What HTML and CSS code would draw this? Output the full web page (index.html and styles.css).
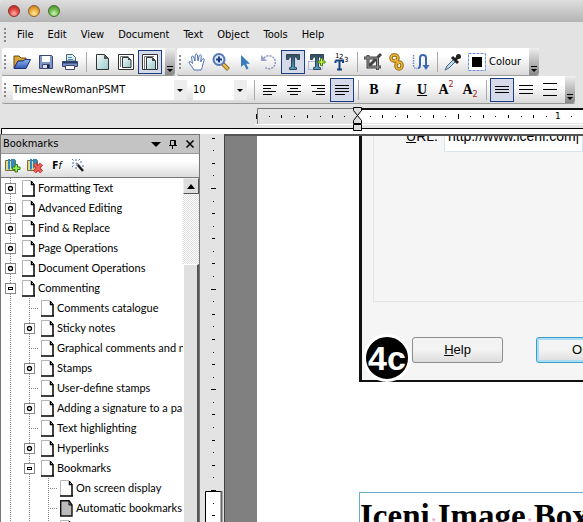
FILE: index.html
```html
<!DOCTYPE html>
<html lang="en">
<head>
<meta charset="utf-8">
<title>PDF Editor</title>
<link rel="stylesheet" href="styles.css">
</head>
<body>
<svg class="defs" aria-hidden="true">
  <defs>
    <linearGradient id="pageFill" x1="0" y1="0" x2="1" y2="1"><stop offset="0" stop-color="#f4fbfa"/><stop offset="1" stop-color="#98c9cb"/></linearGradient>
    <linearGradient id="tFill" x1="0" y1="0" x2="0" y2="1"><stop offset="0" stop-color="#34495c"/><stop offset="1" stop-color="#4aa3cf"/></linearGradient>
    <linearGradient id="blue" x1="0" y1="0" x2="0" y2="1"><stop offset="0" stop-color="#8fb4ee"/><stop offset="1" stop-color="#3158b8"/></linearGradient>
    <symbol id="sheet" viewBox="0 0 13 17"><path d="M1 16V1h8l3 4v11z" fill="#fff"/><path d="M.5 16V.5H9" fill="none" stroke="#b4b4b4"/><path d="M9.500 1v3.500H12M12 4v12M0 16h13" fill="none" stroke="#000" stroke-width="1.500"/><path d="M9 1l3 3" stroke="#000"/></symbol>
    <symbol id="plus" viewBox="0 0 11 11"><rect x=".5" y=".5" width="10" height="10" fill="#fff" stroke="#888"/><circle cx="5.500" cy="5.500" r="2" fill="#fff" stroke="#000" stroke-width="1.300"/></symbol>
    <symbol id="minus" viewBox="0 0 11 11"><rect x=".5" y=".5" width="10" height="10" fill="#fff" stroke="#888"/><rect x="3.500" y="4.500" width="4" height="2" fill="#fff" stroke="#000"/></symbol>
  </defs>
</svg>

<header class="titlebar"><span class="light red"></span><span class="light amber"></span><span class="light green"></span></header>

<nav class="menubar">
  <span class="grip"></span>
  <a href="#">File</a><a href="#">Edit</a><a href="#">View</a><a href="#">Document</a><a href="#">Text</a><a href="#">Object</a><a href="#">Tools</a><a href="#">Help</a>
</nav>

<div class="toolrow">
  <div class="toolbar">
    <span class="grip"></span>
    <button class="tool" aria-label="Open"><svg width="20" height="20" viewBox="0 0 20 20"><path d="M2 16V4h5l2 2h5v3H6z" fill="#d9a53a" stroke="#6b4a10"/><path d="M2 16.500L6 9h5l2-1.500h5.500L14 16.500z" fill="url(#blue)" stroke="#17307a"/></svg></button>
    <button class="tool" aria-label="Save"><svg width="20" height="20" viewBox="0 0 20 20"><path d="M3.500 3.500h12l1 1v12h-13z" fill="#7f96c8" stroke="#3a4677"/><path d="M6 4h8v6H6z" fill="#fff"/><path d="M6.500 12.500h7v4h-7z" fill="#dfe3ee" stroke="#3a4677"/><path d="M11 13h2v3h-2z" fill="#223"/></svg></button>
    <button class="tool" aria-label="Print"><svg width="20" height="20" viewBox="0 0 20 20"><path d="M6.500 9V2.500h6l3 3V9z" fill="#d5f0f5" stroke="#466"/><path d="M8 5.500h4M8 7.500h5" stroke="#58a"/><path d="M2.500 9.500h15v5h-15z" fill="#7591c6" stroke="#35446f"/><path d="M3 10h14v1.500H3z" fill="#2b3c6e"/><path d="M5.500 13.500h9v4h-9z" fill="#fff" stroke="#446"/></svg></button>
    <span class="sep"></span>
    <button class="tool" aria-label="Single page"><svg width="20" height="20" viewBox="0 0 20 20"><path d="M4.500 2.500h8l4 4v11h-12z" fill="url(#pageFill)" stroke="#333"/><path d="M12 2.500v4.500h4.500z" fill="#555"/></svg></button>
    <button class="tool" aria-label="Page with border"><svg width="20" height="20" viewBox="0 0 20 20"><path d="M2.500 2.500h15v15h-15z" fill="#fff" stroke="#333"/><path d="M6.500 5.500h6l2.500 2.500v7.500H6.500z" fill="url(#pageFill)" stroke="#333"/><path d="M4.500 15V4.500h8" fill="none" stroke="#777"/><path d="M12 5.500V8h3z" fill="#444"/></svg></button>
    <button class="tool on" aria-label="Page with margins"><svg width="20" height="20" viewBox="0 0 20 20"><path d="M2.500 2.500h15v15h-15z" fill="#fff" stroke="#333"/><path d="M6.500 17.500v-12h6l3 3v9z" fill="url(#pageFill)" stroke="#333"/><path d="M4.500 17V4.500H14" fill="none" stroke="#777"/><path d="M12 5.500v3.500h3.500z" fill="#444"/></svg></button>
    <button class="more" aria-label="More page tools"><svg width="8" height="8" viewBox="0 0 8 8"><path d="M1 1.500h6" stroke="#000" stroke-width="1"/><path d="M1 4h6L4 7z"/></svg></button>
  </div>
  <div class="toolbar">
    <span class="grip"></span>
    <button class="tool" aria-label="Hand"><svg width="20" height="20" viewBox="0 0 20 20"><path d="M7 18C5 14 2 12 2 10c1-1 2 0 3.500 1.500L4.500 5c.5-1.500 2-1 2.200 0L8 9 8.200 3c.3-1.300 2-1.300 2.200 0l.6 6 1.300-5.500c.6-1.200 2-.8 2 .4L13.700 10l1.800-3c1-1 2 0 1.700 1l-1.500 5c-.2 2-.8 3.500-1.700 5z" fill="#fff" stroke="#4e72b4"/></svg></button>
    <button class="tool" aria-label="Zoom"><svg width="20" height="20" viewBox="0 0 20 20"><path d="M12 12l5.500 5.500" stroke="#8a6a20" stroke-width="4"/><path d="M12 12l5 5" stroke="#f3c44c" stroke-width="2"/><circle cx="8" cy="7.500" r="5.500" fill="#dce9fb" stroke="#5577b5" stroke-width="2"/><path d="M5 7.500h6M8 4.500v6" stroke="#1d3d85" stroke-width="2"/></svg></button>
    <button class="tool" aria-label="Select"><svg width="20" height="20" viewBox="0 0 20 20"><path d="M6 3v12l3-2.500 2.500 5 2-1-2.300-4.700H15z" fill="#397ebc"/></svg></button>
    <button class="tool" aria-label="Rotate"><svg width="20" height="20" viewBox="0 0 20 20"><path d="M5 6a6.500 6.500 0 1 1 1 9.500" fill="none" stroke="#8e97c6" stroke-width="1.500" stroke-dasharray="2 1"/><path d="M2 3v6h6z" fill="#9aa1c9"/></svg></button>
    <button class="tool on" aria-label="Edit text"><svg width="20" height="20" viewBox="0 0 20 20"><path d="M3.500 2.500h13v5h-2L13.500 5h-2v10l2 .7v1.800h-7v-1.800l2-.7V5h-2l-1 2.500h-2z" fill="url(#tFill)" stroke="#345"/></svg></button>
    <button class="tool" aria-label="Add text"><svg width="20" height="20" viewBox="0 0 20 20"><path d="M1.500 9.500v8h13M1.500 9.500h14v8" fill="none" stroke="#7389d5" stroke-dasharray="1 1"/><path d="M3.500 2.500h13v5h-2L13.500 5h-2v10l2 .7v1.800h-7v-1.800l2-.7V5h-2l-1 2.500h-2z" fill="url(#tFill)" stroke="#345"/><path d="M13.500 6.500h2v2.500h2.500v2h-2.500v2.500h-2v-2.500H11v-2h2.500z" fill="#cdf53c" stroke="#47801a"/></svg></button>
    <button class="tool" aria-label="Number text"><svg width="22" height="22" viewBox="0 0 22 22"><text x="5" y="7" class="ico-num">1</text><text x="9" y="8" class="ico-num">2</text><text x="14" y="11" class="ico-num">3</text><path d="M5.500 9.500h7.500V12M5.500 12V9.500M9.500 10v8M7 18.500h5" fill="none" stroke="#16407f" stroke-width="2"/></svg></button>
    <span class="sep"></span>
    <button class="tool" aria-label="Crop"><svg width="20" height="20" viewBox="0 0 20 20"><path d="M1 6h13.500v12M5 3v12h13M6 14L18 2" fill="none" stroke="#444" stroke-width="3"/><path d="M1.500 6h13v11.500M5 3.500V15h12.500" fill="none" stroke="#999"/></svg></button>
    <button class="tool" aria-label="Link"><svg width="20" height="20" viewBox="0 0 20 20"><g fill="none" stroke="#94670c" stroke-width="3.500"><rect x="4" y="3" width="7" height="6" rx="3"/><rect x="9" y="10" width="6" height="7" rx="3"/><path d="M8 7l4 5"/></g><g fill="none" stroke="#e8b73c" stroke-width="1.500"><rect x="4" y="3" width="7" height="6" rx="3"/><rect x="9" y="10" width="6" height="7" rx="3"/><path d="M8 7l4 5"/></g></svg></button>
    <button class="tool" aria-label="Reading order"><svg width="20" height="20" viewBox="0 0 20 20"><path d="M2.500 3v10q0 3.500 4 3.500" fill="none" stroke="#6e87c8" stroke-width="1.500" stroke-dasharray="1.500 1"/><path d="M7 16q2 0 2-3V6q0-3 3-3t3 3v8" fill="none" stroke="#3c66b4" stroke-width="2"/><path d="M11.500 13h7L15 18z" fill="#3c66b4"/></svg></button>
    <span class="sep"></span>
    <button class="tool" aria-label="Eyedropper"><svg width="20" height="20" viewBox="0 0 20 20"><path d="M2 18l2-4 7-7 2 2-7 7z" fill="#b7def8" stroke="#4a6277"/><path d="M9 5l6 6M12 8l4-4" stroke="#222" stroke-width="3"/><circle cx="15.500" cy="4.500" r="2.500" fill="#222"/></svg></button>
    <button class="colour"><svg width="18" height="18" viewBox="0 0 18 18"><path d="M.5.500h17v17H.5z" fill="#fff" stroke="#6d8de0" stroke-dasharray="3 1"/><path d="M4 4h10v10H4z"/></svg>Colour</button>
    <button class="more" aria-label="More edit tools"><svg width="8" height="8" viewBox="0 0 8 8"><path d="M1 1.500h6" stroke="#000"/><path d="M1 4h6L4 7z"/></svg></button>
  </div>
</div>

<div class="toolrow">
  <div class="toolbar format">
    <span class="grip"></span>
    <span class="combo font"><select aria-label="Font"><option>TimesNewRomanPSMT</option></select></span>
    <span class="combo size"><select aria-label="Font size"><option>10</option></select></span>
    <span class="sep"></span>
    <button class="tool" aria-label="Align left"><svg width="16" height="14" viewBox="0 0 16 14"><path d="M1 2.500h14M1 5.500h8M1 8.500h13M1 11.500h9" stroke="#000"/></svg></button>
    <button class="tool" aria-label="Centre"><svg width="16" height="14" viewBox="0 0 16 14"><path d="M1 2.500h14M4 5.500h8M1 8.500h14M4 11.500h8" stroke="#000"/></svg></button>
    <button class="tool" aria-label="Align right"><svg width="16" height="14" viewBox="0 0 16 14"><path d="M1 2.500h14M7 5.500h8M2 8.500h13M6 11.500h9" stroke="#000"/></svg></button>
    <button class="tool on" aria-label="Justify"><svg width="16" height="14" viewBox="0 0 16 14"><path d="M1 2.500h14M1 5.500h14M1 8.500h14M1 11.500h10" stroke="#000"/></svg></button>
    <span class="sep"></span>
    <button class="tool letter"><b>B</b></button>
    <button class="tool letter"><i>I</i></button>
    <button class="tool letter"><u>U</u></button>
    <button class="tool letter">A<sup>2</sup></button>
    <button class="tool letter">A<sub>2</sub></button>
    <span class="sep"></span>
    <button class="tool on" aria-label="Single spacing"><svg width="16" height="14" viewBox="0 0 16 14"><path d="M1 3.500h14M1 6.500h14M1 9.500h14" stroke="#000"/></svg></button>
    <button class="tool" aria-label="Medium spacing"><svg width="16" height="14" viewBox="0 0 16 14"><path d="M1 2.500h14M1 6.500h14M1 10.500h14" stroke="#000"/></svg></button>
    <button class="tool" aria-label="Wide spacing"><svg width="16" height="14" viewBox="0 0 16 14"><path d="M1 .5h14M1 6.500h14M1 12.500h14" stroke="#000"/></svg></button>
    <button class="more" aria-label="More format tools"><svg width="8" height="8" viewBox="0 0 8 8"><path d="M1 1.500h6" stroke="#000"/><path d="M1 4h6L4 7z"/></svg></button>
  </div>
</div>

<div class="ruler">
  <svg width="100%" height="30">
    <rect x="1" y="24" width="100%" height="6" fill="#fff"/>
    <path d="M1.500 30V24.500" stroke="#000"/>
    <rect x="1" y="24" width="100%" height="1" fill="#000"/>
    <rect x="255" y="20" width="100%" height="1" fill="#fff"/>
    <path d="M257.500 20V4.500H357" fill="none" stroke="#777"/>
    <rect x="357" y="5" width="100%" height="14" fill="#fff"/>
    <rect x="357" y="4" width="100%" height="2" fill="#111"/>
    <path d="M256.500 10v5M281.500 11v3M307.500 11v3M332.500 11v3M382.500 11v3M407.500 11v3M433.500 11v3M458.500 10v5M483.500 11v3M508.500 11v3M533.500 11v3" stroke="#000"/>
    <path d="M269 12.500h1M294 12.500h1M320 12.500h1M344 12.500h1M370 12.500h1M395 12.500h1M420 12.500h1M445 12.500h1M470 12.500h1M495 12.500h1M521 12.500h1M546 12.500h1M571 12.500h1" stroke="#000"/>
    <text x="555" y="15" class="ruler-num">1</text>
    <path d="M353.500 3.500h8v3l-4 5-4-5zM357.500 11.500l4 5v3h-8v-3zM353.500 20.500h8v6h-8z" fill="#ddd" stroke="#000"/>
  </svg>
</div>

<main class="workspace">
  <aside class="panel">
    <div class="panel-head"><h2>Bookmarks</h2>
      <button aria-label="Panel menu"><svg width="10" height="10" viewBox="0 0 10 10"><path d="M0 3h10L5 8z"/></svg></button>
      <button aria-label="Pin"><svg width="10" height="10" viewBox="0 0 10 10"><path d="M2.500 6V1.500h5V6M1 6.500h8M4.500 7v3M6.500 1.500V6" fill="none" stroke="#000"/></svg></button>
      <button aria-label="Close"><svg width="10" height="10" viewBox="0 0 10 10"><path d="M1.500 1.500l7 7M8.500 1.500l-7 7" stroke="#000" stroke-width="1.500"/></svg></button>
    </div>
    <div class="panel-tools">
      <button aria-label="Add bookmark"><svg width="16" height="16" viewBox="0 0 16 16"><path d="M.5 2.500h10v10H.5z" fill="#e3db86" stroke="#776c34"/><path d="M3 1h2v11l-1-1-1 1zM6 1h4v10l-2-2-2 2z" fill="#3189c8"/><path d="M10 6.500h2.500V9H15v2.500h-2.500V14H10v-2.500H7.500V9H10z" fill="#96ea59" stroke="#347c20"/></svg></button>
      <button aria-label="Delete bookmark"><svg width="16" height="16" viewBox="0 0 16 16"><path d="M.5 2.500h10v10H.5z" fill="#e3db86" stroke="#776c34"/><path d="M3 1h2v11l-1-1-1 1zM6 1h4v10l-2-2-2 2z" fill="#3189c8"/><path d="M7.500 6l7 8M14.500 6l-7 8" stroke="#b02727" stroke-width="4"/><path d="M7.500 6l7 8M14.500 6l-7 8" stroke="#f1625a" stroke-width="2"/></svg></button>
      <button class="ff" aria-label="Font style"><b>F</b><i>f</i></button>
      <button aria-label="Wizard"><svg width="16" height="16" viewBox="0 0 16 16"><path d="M6 6l6 7" stroke="#222" stroke-width="2.500"/><path d="M5 5l2 2" stroke="#89a" stroke-width="2"/><path d="M5 1v2M1 5h2M1 1l1.500 1.500M9 1L7.500 2.500M1 9l1.500-1.500M11 4H9M5 9v2M11 8h2" stroke="#4472b8"/></svg></button>
    </div>
    <div class="tree-wrap">
      <ul class="tree">
        <li><div class="row"><svg class="tog"><use href="#plus"/></svg><svg class="doc"><use href="#sheet"/></svg><span>Formatting Text</span></div></li>
        <li><div class="row"><svg class="tog"><use href="#plus"/></svg><svg class="doc"><use href="#sheet"/></svg><span>Advanced Editing</span></div></li>
        <li><div class="row"><svg class="tog"><use href="#plus"/></svg><svg class="doc"><use href="#sheet"/></svg><span>Find &amp; Replace</span></div></li>
        <li><div class="row"><svg class="tog"><use href="#plus"/></svg><svg class="doc"><use href="#sheet"/></svg><span>Page Operations</span></div></li>
        <li><div class="row"><svg class="tog"><use href="#plus"/></svg><svg class="doc"><use href="#sheet"/></svg><span>Document Operations</span></div></li>
        <li><div class="row"><svg class="tog"><use href="#minus"/></svg><svg class="doc"><use href="#sheet"/></svg><span>Commenting</span></div>
          <ul>
            <li><div class="row leaf"><svg class="doc"><use href="#sheet"/></svg><span>Comments catalogue</span></div></li>
            <li><div class="row"><svg class="tog"><use href="#plus"/></svg><svg class="doc"><use href="#sheet"/></svg><span>Sticky notes</span></div></li>
            <li><div class="row leaf"><svg class="doc"><use href="#sheet"/></svg><span>Graphical comments and n</span></div></li>
            <li><div class="row"><svg class="tog"><use href="#plus"/></svg><svg class="doc"><use href="#sheet"/></svg><span>Stamps</span></div></li>
            <li><div class="row leaf"><svg class="doc"><use href="#sheet"/></svg><span>User-define stamps</span></div></li>
            <li><div class="row"><svg class="tog"><use href="#plus"/></svg><svg class="doc"><use href="#sheet"/></svg><span>Adding a signature to a pa</span></div></li>
            <li><div class="row leaf"><svg class="doc"><use href="#sheet"/></svg><span>Text highlighting</span></div></li>
            <li><div class="row"><svg class="tog"><use href="#plus"/></svg><svg class="doc"><use href="#sheet"/></svg><span>Hyperlinks</span></div></li>
            <li><div class="row"><svg class="tog"><use href="#minus"/></svg><svg class="doc"><use href="#sheet"/></svg><span>Bookmarks</span></div>
              <ul>
                <li><div class="row leaf"><svg class="doc"><use href="#sheet"/></svg><span>On screen display</span></div></li>
                <li><div class="row leaf"><svg class="doc" viewBox="0 0 13 17"><path d="M.7 16V.7H9L12 5v11z" fill="#bbb" stroke="#111" stroke-width="1.400"/><path d="M9 1v4h3" fill="none" stroke="#000"/></svg><span>Automatic bookmarks</span></div></li>
                <li><div class="row leaf"><svg class="doc"><use href="#sheet"/></svg></div></li>
              </ul>
            </li>
          </ul>
        </li>
      </ul>
      <div class="scroll"><button aria-label="Scroll up"><svg width="8" height="5" viewBox="0 0 8 5"><path d="M0 5h8L4 0z"/></svg></button><span class="track"></span><span class="thumb"></span></div>
    </div>
  </aside>

  <div class="vruler">
    <svg width="20" height="388" viewBox="0 134 20 388">
      <path d="M1.500 523V491.500H18" fill="#fff" stroke="#000"/><path d="M2 492h15v31H2z" fill="#fff"/><path d="M17.500 491v32" stroke="#666" stroke-width="2"/>
      <path d="M8 138.500h3M8 163.500h3M8 213.500h3M8 238.500h3M8 263.500h3M8 314.500h3M8 339.500h3M8 364.500h3M8 414.500h3M8 440.500h3M8 465.500h3M8 515.500h3M7 188.500h5M7 289.500h5M7 389.500h5M7 490.500h5M9 150.500h1M9 175.500h1M9 201.500h1M9 226.500h1M9 251.500h1M9 276.500h1M9 301.500h1M9 326.500h1M9 352.500h1M9 377.500h1M9 402.500h1M9 427.500h1M9 452.500h1M9 477.500h1M9 503.500h1" stroke="#000"/>
    </svg>
  </div>

  <section class="canvas">
    <article class="page">
      <form class="dialog">
        <fieldset class="group"><label for="url"><u>U</u>RL:</label><input id="url" type="text" value="http://www.iceni.com|"></fieldset>
        <div class="actions"><button type="button" class="push"><u>H</u>elp</button><button type="button" class="push primary">OK</button></div>
        <span class="badge">4c</span>
      </form>
      <h1 class="textbox">Iceni<i>·</i>Image<i>·</i>Box</h1>
    </article>
  </section>
</main>
</body>
</html>
```
FILE: styles.css
```css
* { box-sizing: border-box; }
html { height: 100%; }
body {
  margin: 0;
  height: 100vh;
  display: flex;
  flex-direction: column;
  overflow: hidden;
  background: #e3e3e3;
  color: #000;
  font: 11px/14px "DejaVu Sans Condensed", "DejaVu Sans", sans-serif;
}
button, select, input { font: inherit; color: inherit; margin: 0; padding: 0; border: 0; background: none; }
svg { display: block; }
.defs { position: absolute; width: 0; height: 0; }

.titlebar {
  flex: none;
  height: 22px;
  display: flex;
  align-items: center;
  gap: 8px;
  padding-left: 8px;
  border-top-left-radius: 4px;
  background: linear-gradient(#dedede, #b4b4b4);
}
.light { width: 12px; height: 12px; border-radius: 50%; border: 1px solid #777; }
.red { background: radial-gradient(circle at 50% 75%, #ffb0a8, #e0463f 50%, #a42220); border-color: #8c3030; }
.amber { background: radial-gradient(circle at 50% 75%, #ffe6a0, #eba93c 50%, #b0701c); border-color: #8c6228; }
.green { background: radial-gradient(circle at 50% 75%, #d0f5b0, #6fb84c 50%, #3f8528); border-color: #456e33; }

.menubar { flex: none; height: 26px; display: flex; align-items: center; gap: 14px; padding-left: 2px; }
.menubar a { color: inherit; text-decoration: none; }
.menubar .grip { margin-right: -7px; }

.grip {
  flex: none;
  width: 8px;
  height: 16px;
  background: repeating-linear-gradient(#888 0 2px, transparent 2px 4px) 2px 1px / 2px 14px no-repeat;
}
.toolrow { flex: none; display: flex; gap: 2px; padding-left: 2px; height: 28px; }
.toolbar {
  display: flex;
  align-items: center;
  height: 28px;
  border-bottom: 1px solid #999;
  border-radius: 2px;
  background: linear-gradient(#fff 30%, #d9d9d9);
}
.tool {
  flex: none;
  width: 24px;
  height: 24px;
  display: flex;
  align-items: center;
  justify-content: center;
}
.tool.on { background: #d5daea; border: 1px solid #1f3c86; }
.sep { flex: none; width: 8px; height: 20px; background: linear-gradient(#aaa, #aaa) 4px 0 / 1px 100% no-repeat; }
.more {
  align-self: stretch;
  width: 10px;
  margin-left: 3px;
  display: flex;
  align-items: flex-end;
  justify-content: center;
  padding-bottom: 2px;
  border-radius: 0 3px 3px 0;
  background: linear-gradient(#eee, #888);
}
.colour { display: flex; align-items: center; gap: 3px; padding: 0 5px 0 3px; }
.ico-num { font: 7px "DejaVu Sans", sans-serif; }

.combo { position: relative; background: #fff; height: 20px; }
.combo select { width: 100%; height: 20px; appearance: none; }
.combo::after {
  content: "";
  position: absolute;
  right: 0;
  top: 0;
  width: 13px;
  height: 20px;
  background: #ededed;
  pointer-events: none;
}
.combo::before {
  content: "";
  position: absolute;
  z-index: 1;
  right: 4px;
  top: 9px;
  border: 3px solid transparent;
  border-top-color: #000;
  border-bottom: 0;
  pointer-events: none;
}
.font { width: 174px; margin: 0 6px 0 3px; }
.size { width: 54px; margin-right: 3px; }
.letter { font: bold 14px/20px "Liberation Serif", serif; }
.letter sup, .letter sub { font: 8px/8px "DejaVu Sans", sans-serif; color: #a01818; }
.letter sup { align-self: flex-start; margin-top: 3px; }
.letter sub { align-self: flex-end; margin-bottom: 3px; }

.ruler { flex: none; height: 30px; }
.ruler-num { font: 9px "DejaVu Sans", sans-serif; }

.workspace { flex: 1; min-height: 0; display: flex; }
.panel { flex: none; width: 200px; display: flex; flex-direction: column; border: 1px solid #777; border-bottom: 0; }
.panel-head {
  flex: none;
  height: 19px;
  display: flex;
  align-items: center;
  gap: 7px;
  padding: 0 4px 0 2px;
  background: #c4c4c4;
  border-bottom: 1px solid #999;
}
.panel-head h2 { flex: 1; margin: 0; font: inherit; }
.panel-tools {
  flex: none;
  height: 24px;
  display: flex;
  align-items: center;
  gap: 6px;
  padding-left: 4px;
  background: linear-gradient(#fff 30%, #ddd);
  border-bottom: 1px solid #777;
}
.ff { width: 16px; font-size: 10px; }
.tree-wrap { flex: 1; min-height: 0; display: flex; background: #fff; }
.tree { flex: 1; min-width: 0; overflow: hidden; font-family: Lato, sans-serif; }
.tree, .tree ul { margin: 0; padding: 0 0 0 4px; list-style: none; }
.tree ul { padding-left: 19px; }
.tree li { background: repeating-linear-gradient(#888 0 1px, transparent 1px 2px) 5px 0 / 1px 100% no-repeat; }
.row { height: 20px; display: flex; align-items: center; white-space: nowrap; }
.row:not(.leaf) .doc { margin-left: 6px; }
.row.leaf { padding-left: 17px; background: repeating-linear-gradient(90deg, #888 0 1px, transparent 1px 2px) 5px 10px / 9px 1px no-repeat; }
.row span { margin-left: 3px; }
.tog { flex: none; width: 11px; height: 11px; }
.doc { flex: none; width: 13px; height: 17px; }
.scroll { flex: none; width: 16px; display: flex; flex-direction: column; }
.scroll button {
  height: 16px;
  display: flex;
  align-items: center;
  justify-content: center;
  background: #ddd;
  border: 1px solid;
  border-color: #eee #555 #555 #eee;
}
.track { height: 70px; background: repeating-conic-gradient(#ddd 0 25%, #fff 0 50%) 0 0 / 2px 2px; }
.thumb { flex: 1; background: #e0e0e0; border: 1px solid #fff; border-right: 2px solid #555; border-bottom: 0; }

.vruler { flex: none; width: 24px; padding-left: 4px; overflow: hidden; }
.canvas {
  flex: 1;
  min-width: 0;
  display: flex;
  padding-left: 32px;
  overflow: hidden;
  background: #808080;
  border-top: 2px solid #555;
  border-left: 1px solid #444;
}
.page { flex: 1; min-width: 0; padding-left: 102px; background: #fff; }
.dialog {
  position: relative;
  height: 246px;
  padding-left: 11px;
  border: solid #111;
  border-width: 0 0 2px 3px;
  background: #f5f5f5;
}
.group {
  height: 166px;
  min-width: 0;
  margin: 0;
  padding: 0 0 0 32px;
  display: flex;
  align-items: flex-start;
  border: solid #e2e6ea;
  border-width: 0 0 1px 1px;
  font: 14px/16px "Liberation Sans", sans-serif;
}
.group label { flex: none; width: 38px; margin-top: -8px; }
.group input {
  flex: 1;
  min-width: 0;
  height: 30px;
  margin-top: -14px;
  padding: 0 0 2px 3px;
  background: #fff;
  border: 1px solid #d5e4ee;
}
.actions { display: flex; gap: 33px; margin: 35px 0 0 39px; }
.push {
  flex: none;
  width: 91px;
  height: 26px;
  font: 13px/16px "Liberation Sans", sans-serif;
  background: linear-gradient(#f3f3f3 50%, #dcdcdc);
  border: 1px solid #8e8e8e;
  border-radius: 3px;
}
.primary { border-color: #3c9dc8; box-shadow: inset 0 0 0 2px #a8def5; }
.badge {
  position: absolute;
  left: 1px;
  top: 198px;
  width: 48px;
  height: 48px;
  border: 3px solid #fff;
  border-radius: 50%;
  background: #000;
  color: #fff;
  text-align: center;
  font: bold 34px/42px "Liberation Sans", sans-serif;
}
.textbox {
  margin: 110px 0 0;
  height: 60px;
  white-space: nowrap;
  overflow: hidden;
  border: solid #67afc8;
  border-width: 1px 0 0 1px;
  font: bold 33px/46px "Liberation Serif", serif;
}
.textbox i { font-size: 24px; font-style: normal; font-weight: 400; color: #f0a0d8; }
```
